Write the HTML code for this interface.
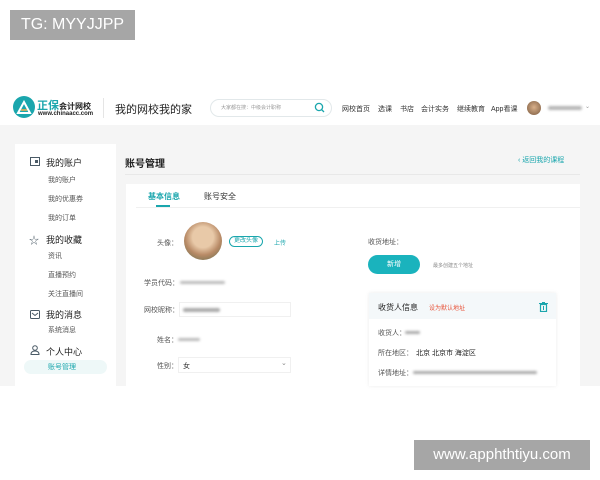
<!DOCTYPE html>
<html><head><meta charset="utf-8"><style>
*{margin:0;padding:0;box-sizing:border-box}
body{width:600px;height:480px;position:relative;background:#fff;font-family:"Liberation Sans","Noto Sans CJK SC",sans-serif;overflow:hidden;color:#333}
.a{position:absolute;white-space:nowrap}
.blur{position:absolute;background:#aaa;border-radius:3px;filter:blur(1.2px)}
.s{font-size:7px;color:#555}
</style></head><body>
<div class="a" style="left:10px;top:10px;width:125px;height:30px;background:#a6a6a6;color:#fff;font-size:16px;line-height:30px;text-align:center">TG: MYYJJPP</div>

<div class="a" style="left:13px;top:96px;width:22px;height:22px;border-radius:50%;background:#1aa6ad"></div>
<svg class="a" style="left:16px;top:100px" width="16" height="14"><path d="M2 13 L8 2 L14 13 Z" fill="none" stroke="#fff" stroke-width="2"/><path d="M5 10 L11 10" stroke="#f6b24a" stroke-width="1.5"/></svg>
<div class="a" style="left:37px;top:97px;font-size:11px;color:#1aa6ad;font-weight:bold">正保<span style="color:#222;font-size:8px">会计网校</span></div>
<div class="a" style="left:38px;top:111px;font-size:6px;color:#222;font-weight:bold">www.chinaacc.com</div>
<div class="a" style="left:103px;top:98px;width:1px;height:20px;background:#e5e5e5"></div>
<div class="a" style="left:115px;top:101px;font-size:11px;color:#222">我的网校我的家</div>
<div class="a" style="left:210px;top:99px;width:122px;height:18px;border:1px solid #e2e8ea;border-radius:9px"></div>
<div class="a" style="left:221px;top:104px;font-size:5px;color:#999">大家都在搜：中级会计职称</div>
<svg class="a" style="left:314px;top:102px" width="11" height="11"><circle cx="5" cy="5" r="3.6" fill="none" stroke="#1aa6ad" stroke-width="1.3"/><path d="M7.5 7.5 L10 10" stroke="#1aa6ad" stroke-width="1.3"/></svg>
<div class="a" style="left:342px;top:104px;font-size:7px;color:#333">网校首页</div>
<div class="a" style="left:378px;top:104px;font-size:7px;color:#333">选课</div>
<div class="a" style="left:400px;top:104px;font-size:7px;color:#333">书店</div>
<div class="a" style="left:421px;top:104px;font-size:7px;color:#333">会计实务</div>
<div class="a" style="left:457px;top:104px;font-size:7px;color:#333">继续教育</div>
<div class="a" style="left:491px;top:104px;font-size:7px;color:#333">App看课</div>
<div class="a" style="left:527px;top:101px;width:14px;height:14px;border-radius:50%;background:radial-gradient(circle at 50% 45%,#d9b08a,#7a5a40)"></div>
<div class="blur" style="left:548px;top:106px;width:34px;height:4px;background:#b5b5b5"></div>
<div class="a" style="left:585px;top:103px;font-size:6px;color:#999">⌄</div>

<div class="a" style="left:0;top:125px;width:600px;height:261px;background:#f5f5f5"></div>
<div class="a" style="left:15px;top:144px;width:101px;height:242px;background:#fff"></div>
<svg class="a" style="left:30px;top:157px" width="10" height="9"><rect x="0.5" y="0.5" width="9" height="8" fill="none" stroke="#4a5a66"/><rect x="5" y="3" width="3" height="3" fill="#4a5a66"/></svg>
<div class="a" style="left:46px;top:156px;font-size:9px;color:#222">我的账户</div>
<div class="a s" style="left:48px;top:175px">我的账户</div>
<div class="a s" style="left:48px;top:194px">我的优惠券</div>
<div class="a s" style="left:48px;top:213px">我的订单</div>
<div class="a" style="left:29px;top:232px;font-size:10px;color:#4a5a66">☆</div>
<div class="a" style="left:46px;top:233px;font-size:9px;color:#222">我的收藏</div>
<div class="a s" style="left:48px;top:251px">资讯</div>
<div class="a s" style="left:48px;top:270px">直播预约</div>
<div class="a s" style="left:48px;top:289px">关注直播间</div>
<svg class="a" style="left:30px;top:310px" width="10" height="9"><rect x="0.5" y="0.5" width="9" height="8" rx="1" fill="none" stroke="#4a5a66"/><path d="M2 3 L5 5.5 L8 3" fill="none" stroke="#4a5a66"/></svg>
<div class="a" style="left:46px;top:308px;font-size:9px;color:#222">我的消息</div>
<div class="a s" style="left:48px;top:325px">系统消息</div>
<svg class="a" style="left:30px;top:345px" width="10" height="10"><circle cx="5" cy="3" r="2.3" fill="none" stroke="#4a5a66"/><path d="M1 9.5 Q1 6 5 6 Q9 6 9 9.5 Z" fill="none" stroke="#4a5a66"/></svg>
<div class="a" style="left:46px;top:345px;font-size:9px;color:#222">个人中心</div>
<div class="a" style="left:24px;top:360px;width:83px;height:14px;background:#eef8f8;border-radius:7px"></div>
<div class="a" style="left:48px;top:362px;font-size:7px;color:#1aa6ad">账号管理</div>

<div class="a" style="left:125px;top:155px;font-size:10px;color:#222;font-weight:bold">账号管理</div>
<div class="a" style="left:518px;top:155px;font-size:7px;color:#1aa6ad">‹ 返回我的课程</div>
<div class="a" style="left:125px;top:174px;width:455px;height:1px;background:#e8e8e8"></div>
<div class="a" style="left:126px;top:184px;width:454px;height:202px;background:#fff"></div>
<div class="a" style="left:148px;top:191px;font-size:8px;color:#1aa6ad;font-weight:bold">基本信息</div>
<div class="a" style="left:156px;top:205px;width:14px;height:2px;background:#1aa6ad"></div>
<div class="a" style="left:204px;top:191px;font-size:8px;color:#333">账号安全</div>
<div class="a" style="left:136px;top:207px;width:444px;height:1px;background:#f0f0f0"></div>

<div class="a s" style="left:157px;top:238px">头像：</div>
<div class="a" style="left:184px;top:222px;width:38px;height:38px;border-radius:50%;background:radial-gradient(circle at 50% 40%,#e8c9a8 35%,#b88a66 60%,#5a6a4a)"></div>
<div class="a" style="left:229px;top:236px;width:34px;height:11px;border:1px solid #1aa6ad;border-radius:6px;font-size:6px;color:#1aa6ad;text-align:center;line-height:9px">更改头像</div>
<div class="a" style="left:274px;top:238px;font-size:6px;color:#1aa6ad">上传</div>
<div class="a s" style="left:144px;top:278px">学员代码：</div>
<div class="blur" style="left:180px;top:281px;width:45px;height:3px;background:#bbb"></div>
<div class="a" style="left:179px;top:302px;width:112px;height:15px;border:1px solid #f0f0f0"></div>
<div class="a s" style="left:144px;top:305px">网校昵称：</div>
<div class="blur" style="left:183px;top:308px;width:37px;height:4px"></div>
<div class="a s" style="left:157px;top:335px">姓名：</div>
<div class="blur" style="left:178px;top:338px;width:22px;height:3px;background:#bbb"></div>
<div class="a" style="left:178px;top:357px;width:113px;height:16px;border:1px solid #f0f0f0"></div>
<div class="a s" style="left:157px;top:361px">性别：</div>
<div class="a" style="left:183px;top:361px;font-size:7px;color:#222">女</div>
<div class="a" style="left:281px;top:359px;font-size:7px;color:#888">⌄</div>

<div class="a s" style="left:368px;top:237px">收货地址：</div>
<div class="a" style="left:368px;top:255px;width:52px;height:19px;border-radius:10px;background:#1ab3bd;color:#fff;font-size:7px;text-align:center;line-height:19px">新增</div>
<div class="a" style="left:433px;top:262px;font-size:5px;color:#888">最多创建五个地址</div>
<div class="a" style="left:369px;top:293px;width:187px;height:93px;background:#fff;box-shadow:0 0 4px rgba(0,0,0,.08)"></div>
<div class="a" style="left:369px;top:293px;width:187px;height:26px;background:#f4f8fa"></div>
<div class="a" style="left:378px;top:302px;font-size:8px;color:#222">收货人信息</div>
<div class="a" style="left:429px;top:303px;font-size:6px;color:#e8543a">设为默认地址</div>
<svg class="a" style="left:539px;top:302px" width="9" height="10"><rect x="1.5" y="2.5" width="6" height="7" fill="none" stroke="#1aa6ad" stroke-width="1.2"/><path d="M0 1.5 H9 M3 0.5 H6 M4.5 4 V8" stroke="#1aa6ad"/></svg>
<div class="a s" style="left:378px;top:328px">收货人：</div>
<div class="blur" style="left:405px;top:331px;width:15px;height:3px"></div>
<div class="a s" style="left:378px;top:348px">所在地区：<span style="color:#222;margin-left:3px">北京 北京市 海淀区</span></div>
<div class="a s" style="left:378px;top:368px">详情地址：</div>
<div class="blur" style="left:413px;top:371px;width:124px;height:3px"></div>

<div class="a" style="left:414px;top:440px;width:176px;height:30px;background:#a6a6a6;color:#fff;font-size:15px;line-height:30px;text-align:center">www.apphthtiyu.com</div>
</body></html>
